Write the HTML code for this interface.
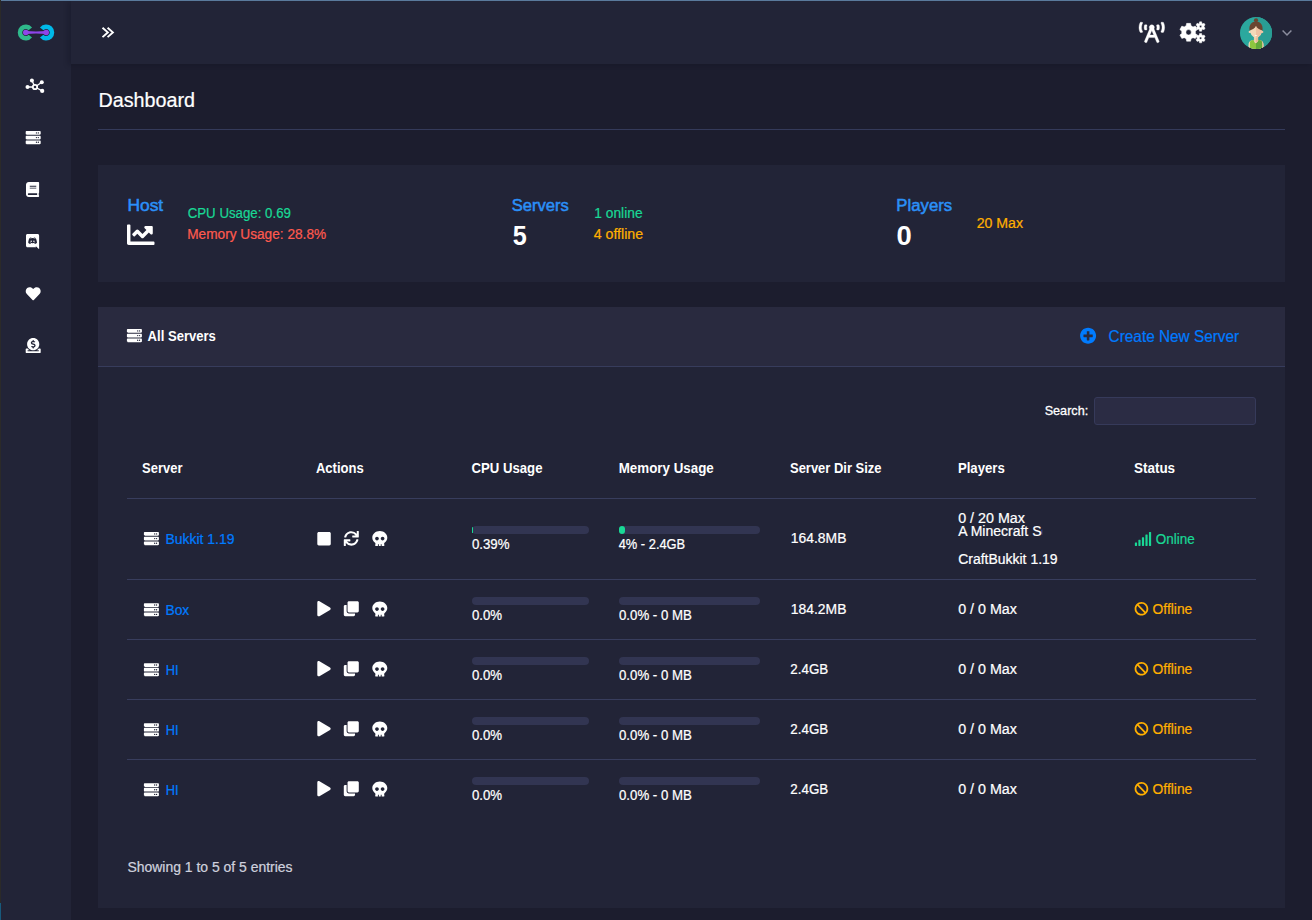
<!DOCTYPE html>
<html><head><meta charset="utf-8"><title>Crafty Controller - Dashboard</title>
<style>
html,body{margin:0;padding:0;}
body{width:1312px;height:920px;overflow:hidden;background:#1c1d2e;font-family:"Liberation Sans",sans-serif;position:relative;}
.r{position:absolute;}
.i{position:absolute;left:0;top:0;display:block;overflow:visible;transform-origin:0 0;}
.t{position:absolute;left:0;top:0;white-space:nowrap;line-height:20px;transform-origin:0 0;}
.clip{position:absolute;left:0;top:0;overflow:hidden;transform-origin:0 0;}
</style></head><body>
<div class="r" style="left:1px;top:1px;width:70px;height:919px;background:#222437;"></div>
<div class="r" style="left:71px;top:1px;width:1241px;height:63px;background:#222437;box-shadow:-3px 1px 5px rgba(10,10,25,.22);"></div>
<div class="r" style="left:0px;top:0px;width:1312px;height:1px;background:#5a7a9c;"></div>
<div class="r" style="left:0px;top:0px;width:1px;height:903px;background:#2b2a29;"></div>
<div class="r" style="left:0px;top:903px;width:1px;height:17px;background:#185a7c;"></div>
<svg class="i" style="transform:translate(14px,20px)" width="44" height="26" viewBox="0 0 44 26">
<path d="M16.30 8.85 A5.8 5.8 0 1 0 16.30 16.15" fill="none" stroke="#2fb98b" stroke-width="4.5"/>
<path d="M27.70 8.85 A5.8 5.8 0 1 1 27.70 16.15" fill="none" stroke="#00b9e8" stroke-width="4.5"/>
<path d="M11.8 11.1 Q22 11.95 32.2 11.1 L32.2 13.9 Q22 13.05 11.8 13.9 Z" fill="#8f45e9"/>
<circle cx="11.8" cy="12.5" r="2.8" fill="#8f45e9"/><circle cx="32.2" cy="12.5" r="2.8" fill="#8f45e9"/>
</svg>
<svg class="i" style="transform:translate(99.5px,25px)" width="17" height="15" viewBox="0 0 17 15"><path d="M3.0 2.7 L8.3 7.4 L3.0 12.1 M8.1 2.7 L13.4 7.4 L8.1 12.1" fill="none" stroke="#fff" stroke-width="1.9" stroke-linecap="butt" stroke-linejoin="miter"/></svg>
<svg class="i" style="transform:translate(24px,76px)" width="22" height="20" viewBox="0 0 22 20">
<g stroke="#fff" stroke-width="1.3" fill="none"><path d="M11 11 L7.9 4.4 M11 11 L17.8 6.2 M11 11 L3.5 11 M11 11 L18.2 14.9"/></g>
<circle cx="11" cy="11" r="2.2" fill="#222437" stroke="#fff" stroke-width="1.8"/>
<circle cx="7.9" cy="4.4" r="2.0" fill="#fff"/><circle cx="17.8" cy="6.2" r="2.0" fill="#fff"/><circle cx="3.5" cy="11" r="2.0" fill="#fff"/><circle cx="18.2" cy="14.9" r="2.1" fill="#fff"/>
</svg>
<svg class="i" style="transform:translate(25.70px,130.10px)" width="15.00" height="15.00" viewBox="0 0 512 512"><path d="M480 160H32c-17.673 0-32-14.327-32-32V64c0-17.673 14.327-32 32-32h448c17.673 0 32 14.327 32 32v64c0 17.673-14.327 32-32 32zm-48-88c-13.255 0-24 10.745-24 24s10.745 24 24 24 24-10.745 24-24-10.745-24-24-24zm-64 0c-13.255 0-24 10.745-24 24s10.745 24 24 24 24-10.745 24-24-10.745-24-24-24zm112 248H32c-17.673 0-32-14.327-32-32v-64c0-17.673 14.327-32 32-32h448c17.673 0 32 14.327 32 32v64c0 17.673-14.327 32-32 32zm-48-88c-13.255 0-24 10.745-24 24s10.745 24 24 24 24-10.745 24-24-10.745-24-24-24zm-64 0c-13.255 0-24 10.745-24 24s10.745 24 24 24 24-10.745 24-24-10.745-24-24-24zm112 248H32c-17.673 0-32-14.327-32-32v-64c0-17.673 14.327-32 32-32h448c17.673 0 32 14.327 32 32v64c0 17.673-14.327 32-32 32zm-48-88c-13.255 0-24 10.745-24 24s10.745 24 24 24 24-10.745 24-24-10.745-24-24-24zm-64 0c-13.255 0-24 10.745-24 24s10.745 24 24 24 24-10.745 24-24-10.745-24-24-24z" fill="#fff"/></svg>
<svg class="i" style="transform:translate(26.00px,182.00px)" width="13.12" height="15.00" viewBox="0 0 448 512"><path d="M448 360V24c0-13.300-10.700-24-24-24H96C43 0 0 43 0 96v320c0 53 43 96 96 96h328c13.300 0 24-10.700 24-24v-16c0-7.500-3.500-14.300-8.900-18.700-4.200-15.400-4.200-59.300 0-74.700 5.400-4.300 8.900-11.100 8.900-18.600zM128 134c0-3.300 2.700-6 6-6h212c3.300 0 6 2.700 6 6v20c0 3.300-2.700 6-6 6H134c-3.300 0-6-2.700-6-6v-20zm0 64c0-3.300 2.700-6 6-6h212c3.300 0 6 2.700 6 6v20c0 3.300-2.700 6-6 6H134c-3.300 0-6-2.700-6-6v-20zm253.400 250H96c-17.700 0-32-14.300-32-32 0-17.600 14.400-32 32-32h285.400c-1.900 17.100-1.900 46.900 0 64z" fill="#fff"/></svg>
<svg class="i" style="transform:translate(26.00px,234.10px)" width="13.12" height="15.00" viewBox="0 0 448 512"><path d="M297.216 243.200c0 15.616-11.520 28.416-26.112 28.416-14.336 0-26.112-12.800-26.112-28.416s11.520-28.416 26.112-28.416c14.592 0 26.112 12.800 26.112 28.416zm-119.552-28.416c-14.592 0-26.112 12.800-26.112 28.416s11.776 28.416 26.112 28.416c14.592 0 26.112-12.800 26.112-28.416.256-15.616-11.520-28.416-26.112-28.416zM448 52.736V512c-64.494-56.994-43.868-38.128-118.784-107.776l13.568 47.360H52.480C23.552 451.584 0 428.032 0 398.848V52.736C0 23.552 23.552 0 52.480 0h343.040C424.448 0 448 23.552 448 52.736zm-72.960 242.688c0-82.432-36.864-149.248-36.864-149.248-36.864-27.648-71.936-26.880-71.936-26.880l-3.584 4.096c43.520 13.312 63.744 32.512 63.744 32.512-60.811-33.329-132.244-33.335-191.232-7.424-9.472 4.352-15.104 7.424-15.104 7.424s21.248-20.224 67.328-33.536l-2.560-3.072s-35.072-.768-71.936 26.880c0 0-36.864 66.816-36.864 149.248 0 0 21.504 37.120 78.080 38.912 0 0 9.472-11.520 17.152-21.248-32.512-9.728-44.800-30.208-44.800-30.208 3.766 2.636 9.976 6.053 10.496 6.400 43.210 24.198 104.588 32.126 159.744 8.960 8.960-3.328 18.944-8.192 29.440-15.104 0 0-12.800 20.992-46.336 30.464 7.680 9.728 16.896 20.736 16.896 20.736 56.576-1.792 78.336-38.912 78.336-38.912z" fill="#fff"/></svg>
<svg class="i" style="transform:translate(25.70px,286.20px)" width="15.00" height="15.00" viewBox="0 0 512 512"><path d="M462.300 62.600C407.500 15.900 326 24.300 275.700 76.200L256 96.500l-19.700-20.300C186.100 24.300 104.500 15.900 49.700 62.600c-62.800 53.600-66.100 149.800-9.900 207.900l193.500 199.800c12.500 12.900 32.800 12.900 45.300 0l193.500-199.800c56.300-58.100 53-154.300-9.800-207.900z" fill="#fff"/></svg>
<svg class="i" style="transform:translate(25.70px,338.10px)" width="15.00" height="15.00" viewBox="0 0 512 512"><path d="M256 416c114.900 0 208-93.100 208-208S370.900 0 256 0 48 93.100 48 208s93.100 208 208 208zM233.800 97.400V80.600c0-9.200 7.400-16.600 16.600-16.600h11.100c9.200 0 16.600 7.400 16.600 16.600v17c15.500.800 30.500 6.100 43 15.400 5.600 4.100 6.200 12.300 1.200 17.100L306 145.600c-3.800 3.700-9.500 3.800-14 1-5.400-3.400-11.400-5.100-17.800-5.100h-38.900c-9 0-16.300 8.200-16.300 18.300 0 8.200 5 15.500 12.100 17.600l62.300 18.700c25.700 7.700 43.700 32.400 43.700 60.100 0 34-26.400 61.500-59.100 62.400v16.800c0 9.200-7.400 16.600-16.600 16.600h-11.100c-9.200 0-16.600-7.400-16.600-16.600v-17c-15.500-.800-30.500-6.100-43-15.400-5.600-4.100-6.200-12.300-1.200-17.100l16.300-15.500c3.800-3.700 9.500-3.800 14-1 5.400 3.400 11.400 5.100 17.800 5.100h38.900c9 0 16.300-8.200 16.300-18.300 0-8.200-5-15.500-12.100-17.600l-62.300-18.700c-25.700-7.700-43.700-32.400-43.700-60.100.100-34 26.400-61.500 59.100-62.400zM480 352h-32.500c-19.600 26-44.600 47.700-73 64h63.800c5.300 0 9.600 3.600 9.600 8v16c0 4.400-4.300 8-9.600 8H73.600c-5.300 0-9.600-3.600-9.600-8v-16c0-4.400 4.300-8 9.600-8h63.800c-28.400-16.300-53.300-38-73-64H32c-17.700 0-32 14.300-32 32v96c0 17.700 14.300 32 32 32h448c17.700 0 32-14.300 32-32v-96c0-17.700-14.300-32-32-32z" fill="#fff"/></svg>
<svg class="i" style="transform:translate(1139.00px,22.25px)" width="25.62" height="20.50" viewBox="0 0 640 512"><path d="M150.940 192h33.730c11.010 0 18.610-10.830 14.860-21.180-4.930-13.580-7.550-27.980-7.550-42.820s2.620-29.240 7.550-42.820C203.290 74.830 195.680 64 184.670 64h-33.730c-7.010 0-13.460 4.490-15.410 11.230C130.640 92.210 128 109.880 128 128c0 18.120 2.640 35.790 7.540 52.760 1.940 6.740 8.390 11.240 15.400 11.240zM89.920 23.340C95.560 12.720 87.970 0 75.960 0H40.630c-6.270 0-12.140 3.590-14.740 9.310C9.400 45.540 0 85.650 0 128c0 24.750 3.120 68.330 26.690 118.860 2.620 5.630 8.420 9.140 14.610 9.140h34.840c12.020 0 19.610-12.740 13.950-23.370-49.780-93.320-16.710-178.150-.17-209.290zM614.060 9.290C611.460 3.580 605.600 0 599.330 0h-35.420c-11.980 0-19.660 12.660-14.020 23.250 18.270 34.290 48.420 119.420.28 209.230-5.720 10.680 1.800 23.520 13.910 23.520h35.230c6.270 0 12.130-3.580 14.730-9.290C630.570 210.480 640 170.360 640 128s-9.420-82.480-25.940-118.710zM489.060 64h-33.730c-11.010 0-18.610 10.830-14.860 21.180 4.930 13.580 7.550 27.980 7.550 42.820s-2.620 29.240-7.550 42.820c-3.760 10.350 3.850 21.180 14.860 21.180h33.730c7.020 0 13.460-4.490 15.410-11.240 4.900-16.970 7.530-34.640 7.530-52.760 0-18.120-2.640-35.790-7.540-52.760-1.940-6.750-8.390-11.240-15.400-11.240zm-116.300 100.120c7.050-10.290 11.200-22.710 11.200-36.120 0-35.350-28.630-64-63.960-64-35.320 0-63.960 28.650-63.960 64 0 13.410 4.150 25.830 11.200 36.120l-130.500 313.410c-3.400 8.150.46 17.520 8.610 20.920l29.510 12.310c8.150 3.400 17.520-.46 20.910-8.610L244.960 384h150.070l49.200 118.150c3.400 8.160 12.760 12.010 20.910 8.610l29.510-12.310c8.150-3.400 12-12.770 8.610-20.920l-130.500-313.410zM271.620 320L320 203.810 368.380 320h-96.760z" fill="#fff" stroke="#fff" stroke-width="9"/></svg>
<svg class="i" style="transform:translate(1178px,19px)" width="30" height="27" viewBox="0 0 30 27"><path d="M13.07 6.86 L12.58 4.37 L8.62 4.37 L8.13 6.86 L7.63 7.07 L7.15 7.32 L6.69 7.61 L6.26 7.94 L3.85 7.12 L1.87 10.55 L3.78 12.22 L3.72 12.76 L3.70 13.30 L3.72 13.84 L3.78 14.38 L1.87 16.05 L3.85 19.48 L6.26 18.66 L6.69 18.99 L7.15 19.28 L7.63 19.53 L8.13 19.74 L8.62 22.23 L12.58 22.23 L13.07 19.74 L13.57 19.53 L14.05 19.28 L14.51 18.99 L14.94 18.66 L17.35 19.48 L19.33 16.05 L17.42 14.38 L17.48 13.84 L17.50 13.30 L17.48 12.76 L17.42 12.22 L19.33 10.55 L17.35 7.12 L14.94 7.94 L14.51 7.61 L14.05 7.32 L13.57 7.07 Z M7.90 13.30 a2.7 2.7 0 1 0 5.4 0 a2.7 2.7 0 1 0 -5.4 0 Z M23.84 4.28 L23.63 2.86 L21.57 2.86 L21.36 4.28 L21.11 4.39 L20.88 4.51 L20.65 4.66 L20.43 4.82 L19.10 4.29 L18.07 6.07 L19.19 6.96 L19.16 7.23 L19.15 7.50 L19.16 7.77 L19.19 8.04 L18.07 8.93 L19.10 10.71 L20.43 10.18 L20.65 10.34 L20.88 10.49 L21.11 10.61 L21.36 10.72 L21.57 12.14 L23.63 12.14 L23.84 10.72 L24.09 10.61 L24.33 10.49 L24.55 10.34 L24.77 10.18 L26.10 10.71 L27.13 8.93 L26.01 8.04 L26.04 7.77 L26.05 7.50 L26.04 7.23 L26.01 6.96 L27.13 6.07 L26.10 4.29 L24.77 4.82 L24.55 4.66 L24.32 4.51 L24.09 4.39 Z M21.45 7.50 a1.15 1.15 0 1 0 2.3 0 a1.15 1.15 0 1 0 -2.3 0 Z M23.84 15.98 L23.63 14.56 L21.57 14.56 L21.36 15.98 L21.11 16.09 L20.88 16.21 L20.65 16.36 L20.43 16.52 L19.10 15.99 L18.07 17.77 L19.19 18.66 L19.16 18.93 L19.15 19.20 L19.16 19.47 L19.19 19.74 L18.07 20.63 L19.10 22.41 L20.43 21.88 L20.65 22.04 L20.88 22.19 L21.11 22.31 L21.36 22.42 L21.57 23.84 L23.63 23.84 L23.84 22.42 L24.09 22.31 L24.33 22.19 L24.55 22.04 L24.77 21.88 L26.10 22.41 L27.13 20.63 L26.01 19.74 L26.04 19.47 L26.05 19.20 L26.04 18.93 L26.01 18.66 L27.13 17.77 L26.10 15.99 L24.77 16.52 L24.55 16.36 L24.32 16.21 L24.09 16.09 Z M21.45 19.20 a1.15 1.15 0 1 0 2.3 0 a1.15 1.15 0 1 0 -2.3 0 Z" fill="#fff" fill-rule="evenodd" stroke="#fff" stroke-width="0.5" stroke-linejoin="round"/></svg>
<svg class="i" style="transform:translate(1240px,17px)" width="32" height="32" viewBox="0 0 32 32">
<defs><clipPath id="av"><circle cx="16" cy="16" r="16.05"/></clipPath><clipPath id="avl"><rect x="0" y="0" width="16" height="32"/></clipPath><clipPath id="avr"><rect x="16" y="0" width="16" height="32"/></clipPath></defs>
<g clip-path="url(#av)">
<rect width="32" height="32" fill="#2ba89e"/><rect x="16" width="16" height="32" fill="#299d94"/>
<path id="avarm" d="M8.5 32 L8.5 28 Q8.6 24.3 11.4 23.5 L20.6 23.5 Q23.4 24.3 23.5 28 L23.5 32 Z" fill="#f1d6b4"/>
<path d="M16 23.5 L20.6 23.5 Q23.4 24.3 23.5 28 L23.5 32 L16 32 Z" fill="#e9c39f"/>
<path d="M9.9 32 L9.9 25.4 Q10 23.6 12 23.2 L13.4 22.9 Q16 29.6 18.6 22.9 L20 23.2 Q22 23.6 22.1 25.4 L22.1 32 Z" fill="#8dc63f"/>
<path d="M16 26.2 Q17.6 25.8 18.6 22.9 L20 23.2 Q22 23.6 22.1 25.4 L22.1 32 L16 32 Z" fill="#62a93c"/>
<path d="M13.9 18 L18.1 18 L18.1 23.4 Q16 27.6 13.9 23.4 Z" fill="#efcfac"/>
<path d="M16 18 L18.1 18 L18.1 23.4 Q17.2 25.3 16 25.5 Z" fill="#e6bd98"/>
<circle cx="9.8" cy="14.9" r="1.15" fill="#f3d9b9"/><circle cx="22.2" cy="14.9" r="1.15" fill="#edc2a3"/>
<path d="M10.2 8 L21.8 8 L21.8 15.2 Q21.4 17.6 18.4 19.9 Q16 21.4 13.6 19.9 Q10.6 17.6 10.2 15.2 Z" fill="#f3d9b9"/>
<path d="M16 8 L21.8 8 L21.8 15.2 Q21.4 17.6 18.4 19.9 Q17.2 20.7 16 20.8 Z" fill="#edc2a3"/>
<path d="M9.5 13.4 C8.7 7.6 12 4.5 16 4.5 C20 4.5 23.3 7.6 22.5 13.4 C19.6 12.9 16.8 11 16 8.7 C15.2 11 12.4 12.9 9.5 13.4 Z" fill="#6a4631"/>
<circle cx="16" cy="3.3" r="2.1" fill="#6a4631"/>
<path d="M14.5 18.5 Q16 19.7 17.500 18.500 Q16 18.200 14.500 18.500 Z" fill="#fff"/>
</g></svg>
<svg class="i" style="transform:translate(1281px,28px)" width="12" height="10" viewBox="0 0 12 10"><path d="M1.600 2.400 L6 6.900 L10.400 2.400" fill="none" stroke="#8b8d9e" stroke-width="1.5"/></svg>
<span class="t" style="font-size:20px;color:#fff;transform:translate(98.51px,90.07px) scaleX(0.9864);-webkit-text-stroke:0.22px #fff;">Dashboard</span>
<div class="r" style="left:98px;top:129px;width:1187px;height:1px;background:#343a5a;"></div>
<div class="r" style="left:98px;top:165px;width:1187px;height:117px;background:#222437;"></div>
<span class="t" style="font-size:16px;color:#2b90f8;transform:translate(127.47px,196.46px) scaleX(1.0846);-webkit-text-stroke:0.5px #2b90f8;">Host</span>
<svg class="i" style="transform:translate(127.00px,220.95px)" width="27.50" height="27.50" viewBox="0 0 512 512"><path d="M496 384H64V80c0-8.840-7.160-16-16-16H16C7.160 64 0 71.160 0 80v336c0 17.670 14.330 32 32 32h464c8.840 0 16-7.160 16-16v-32c0-8.840-7.160-16-16-16zM464 96H345.940c-21.380 0-32.090 25.850-16.970 40.970l32.400 32.400L288 242.750l-73.370-73.370c-12.500-12.500-32.760-12.500-45.250 0l-68.690 68.690c-6.250 6.250-6.250 16.380 0 22.630l22.620 22.620c6.250 6.250 16.380 6.250 22.630 0L192 237.250l73.370 73.370c12.500 12.500 32.760 12.500 45.250 0l96-96 32.400 32.400c15.120 15.120 40.970 4.410 40.970-16.970V112c.01-8.840-7.150-16-15.990-16z" fill="#fff"/></svg>
<span class="t" style="font-size:14px;color:#19d895;transform:translate(187.70px,202.85px) scaleX(0.9473);-webkit-text-stroke:0.22px #19d895;">CPU Usage: 0.69</span>
<span class="t" style="font-size:14px;color:#ff5a4e;transform:translate(187.21px,224.15px) scaleX(0.9755);-webkit-text-stroke:0.22px #ff5a4e;">Memory Usage: 28.8%</span>
<span class="t" style="font-size:16px;color:#2b90f8;transform:translate(511.66px,196.46px) scaleX(1.0355);-webkit-text-stroke:0.5px #2b90f8;">Servers</span>
<span class="t" style="font-size:27px;color:#fff;transform:translate(512.80px,225.94px) scaleX(0.9333);font-weight:700;">5</span>
<span class="t" style="font-size:14px;color:#19d895;transform:translate(594.31px,202.85px) scaleX(0.9841);-webkit-text-stroke:0.22px #19d895;">1 online</span>
<span class="t" style="font-size:14px;color:#ffaf00;transform:translate(593.71px,224.15px) scaleX(1.0136);-webkit-text-stroke:0.22px #ffaf00;">4 offline</span>
<span class="t" style="font-size:16px;color:#2b90f8;transform:translate(896.36px,196.46px) scaleX(1.0450);-webkit-text-stroke:0.5px #2b90f8;">Players</span>
<span class="t" style="font-size:27px;color:#fff;transform:translate(896.40px,225.94px) scaleX(1.0133);font-weight:700;">0</span>
<span class="t" style="font-size:14px;color:#ffaf00;transform:translate(976.71px,213.35px) scaleX(1.0074);-webkit-text-stroke:0.22px #ffaf00;">20 Max</span>
<div class="r" style="left:98px;top:307px;width:1187px;height:601px;background:#222437;"></div>
<div class="r" style="left:98px;top:307px;width:1187px;height:59px;background:#292a3f;"></div>
<div class="r" style="left:98px;top:366px;width:1187px;height:1px;background:#373c5c;"></div>
<svg class="i" style="transform:translate(126.90px,328.10px)" width="15.00" height="15.00" viewBox="0 0 512 512"><path d="M480 160H32c-17.673 0-32-14.327-32-32V64c0-17.673 14.327-32 32-32h448c17.673 0 32 14.327 32 32v64c0 17.673-14.327 32-32 32zm-48-88c-13.255 0-24 10.745-24 24s10.745 24 24 24 24-10.745 24-24-10.745-24-24-24zm-64 0c-13.255 0-24 10.745-24 24s10.745 24 24 24 24-10.745 24-24-10.745-24-24-24zm112 248H32c-17.673 0-32-14.327-32-32v-64c0-17.673 14.327-32 32-32h448c17.673 0 32 14.327 32 32v64c0 17.673-14.327 32-32 32zm-48-88c-13.255 0-24 10.745-24 24s10.745 24 24 24 24-10.745 24-24-10.745-24-24-24zm-64 0c-13.255 0-24 10.745-24 24s10.745 24 24 24 24-10.745 24-24-10.745-24-24-24zm112 248H32c-17.673 0-32-14.327-32-32v-64c0-17.673 14.327-32 32-32h448c17.673 0 32 14.327 32 32v64c0 17.673-14.327 32-32 32zm-48-88c-13.255 0-24 10.745-24 24s10.745 24 24 24 24-10.745 24-24-10.745-24-24-24zm-64 0c-13.255 0-24 10.745-24 24s10.745 24 24 24 24-10.745 24-24-10.745-24-24-24z" fill="#fff"/></svg>
<span class="t" style="font-size:14px;color:#fff;transform:translate(147.60px,326.05px) scaleX(0.9332);font-weight:700;">All Servers</span>
<svg class="i" style="transform:translate(1079.85px,327.60px)" width="16.50" height="16.50" viewBox="0 0 512 512"><path d="M256 8C119 8 8 119 8 256s111 248 248 248 248-111 248-248S393 8 256 8zm144 276c0 6.600-5.400 12-12 12h-92v92c0 6.600-5.400 12-12 12h-56c-6.600 0-12-5.400-12-12v-92h-92c-6.600 0-12-5.400-12-12v-56c0-6.600 5.400-12 12-12h92v-92c0-6.600 5.400-12 12-12h56c6.600 0 12 5.400 12 12v92h92c6.600 0 12 5.400 12 12v56z" fill="#007bff"/></svg>
<span class="t" style="font-size:16px;color:#007bff;transform:translate(1108.61px,326.56px) scaleX(0.9598);-webkit-text-stroke:0.22px #007bff;">Create New Server</span>
<span class="t" style="font-size:13.6px;color:#fff;transform:translate(1044.64px,401.19px) scaleX(0.9306);-webkit-text-stroke:0.3px #fff;">Search:</span>
<div class="r" style="left:1094px;top:397px;width:162px;height:28px;background:#2b2c44;border:1px solid #363a5a;border-radius:3px;box-sizing:border-box;"></div>
<span class="t" style="font-size:14px;color:#fff;transform:translate(142.10px,458.45px) scaleX(0.9251);font-weight:700;">Server</span>
<span class="t" style="font-size:14px;color:#fff;transform:translate(315.90px,458.45px) scaleX(0.9315);font-weight:700;">Actions</span>
<span class="t" style="font-size:14px;color:#fff;transform:translate(471.50px,458.45px) scaleX(0.9404);font-weight:700;">CPU Usage</span>
<span class="t" style="font-size:14px;color:#fff;transform:translate(618.70px,458.45px) scaleX(0.9542);font-weight:700;">Memory Usage</span>
<span class="t" style="font-size:14px;color:#fff;transform:translate(790.00px,458.45px) scaleX(0.9260);font-weight:700;">Server Dir Size</span>
<span class="t" style="font-size:14px;color:#fff;transform:translate(957.90px,458.45px) scaleX(0.9415);font-weight:700;">Players</span>
<span class="t" style="font-size:14px;color:#fff;transform:translate(1134.00px,458.45px) scaleX(0.9600);font-weight:700;">Status</span>
<div class="r" style="left:127px;top:498px;width:1129px;height:1px;background:#383d5d;"></div>
<div class="r" style="left:127px;top:579px;width:1129px;height:1px;background:#383d5d;"></div>
<div class="r" style="left:127px;top:639px;width:1129px;height:1px;background:#383d5d;"></div>
<div class="r" style="left:127px;top:699px;width:1129px;height:1px;background:#383d5d;"></div>
<div class="r" style="left:127px;top:759px;width:1129px;height:1px;background:#383d5d;"></div>
<svg class="i" style="transform:translate(143.90px,531.10px)" width="15.00" height="15.00" viewBox="0 0 512 512"><path d="M480 160H32c-17.673 0-32-14.327-32-32V64c0-17.673 14.327-32 32-32h448c17.673 0 32 14.327 32 32v64c0 17.673-14.327 32-32 32zm-48-88c-13.255 0-24 10.745-24 24s10.745 24 24 24 24-10.745 24-24-10.745-24-24-24zm-64 0c-13.255 0-24 10.745-24 24s10.745 24 24 24 24-10.745 24-24-10.745-24-24-24zm112 248H32c-17.673 0-32-14.327-32-32v-64c0-17.673 14.327-32 32-32h448c17.673 0 32 14.327 32 32v64c0 17.673-14.327 32-32 32zm-48-88c-13.255 0-24 10.745-24 24s10.745 24 24 24 24-10.745 24-24-10.745-24-24-24zm-64 0c-13.255 0-24 10.745-24 24s10.745 24 24 24 24-10.745 24-24-10.745-24-24-24zm112 248H32c-17.673 0-32-14.327-32-32v-64c0-17.673 14.327-32 32-32h448c17.673 0 32 14.327 32 32v64c0 17.673-14.327 32-32 32zm-48-88c-13.255 0-24 10.745-24 24s10.745 24 24 24 24-10.745 24-24-10.745-24-24-24zm-64 0c-13.255 0-24 10.745-24 24s10.745 24 24 24 24-10.745 24-24-10.745-24-24-24z" fill="#fff"/></svg>
<span class="t" style="font-size:14px;color:#007bff;transform:translate(165.41px,528.95px) scaleX(0.9976);-webkit-text-stroke:0.22px #007bff;">Bukkit 1.19</span>
<svg class="i" style="transform:translate(317.30px,531.10px)" width="13.47" height="15.40" viewBox="0 0 448 512"><path d="M400 32H48C21.500 32 0 53.500 0 80v352c0 26.500 21.500 48 48 48h352c26.500 0 48-21.500 48-48V80c0-26.500-21.500-48-48-48z" fill="#fff"/></svg>
<svg class="i" style="transform:translate(343.80px,530.90px)" width="15.00" height="15.00" viewBox="0 0 512 512"><path d="M440.650 12.570l4 82.770A247.160 247.160 0 0 0 255.830 8C134.730 8 33.910 94.920 12.290 209.820A12 12 0 0 0 24.090 224h49.050a12 12 0 0 0 11.670-9.260 175.910 175.910 0 0 1 317-56.940l-101.460-4.860a12 12 0 0 0-12.570 12v47.410a12 12 0 0 0 12 12H500a12 12 0 0 0 12-12V12a12 12 0 0 0-12-12h-47.370a12 12 0 0 0-11.980 12.570zM255.830 432a175.610 175.610 0 0 1-146-77.800l101.800 4.870a12 12 0 0 0 12.570-12v-47.400a12 12 0 0 0-12-12H12a12 12 0 0 0-12 12V500a12 12 0 0 0 12 12h47.350a12 12 0 0 0 12-12.600l-4.150-82.570A247.170 247.170 0 0 0 255.830 504c121.110 0 221.930-86.920 243.550-201.820a12 12 0 0 0-11.800-14.180h-49.050a12 12 0 0 0-11.670 9.260A175.860 175.860 0 0 1 255.830 432z" fill="#fff"/></svg>
<svg class="i" style="transform:translate(372.30px,531.10px)" width="15.00" height="15.00" viewBox="0 0 512 512"><path d="M256 0C114.600 0 0 100.300 0 224c0 70.100 36.900 132.600 94.500 173.700 9.600 6.900 15.200 18.100 13.500 29.900l-9.400 66.200c-1.400 9.600 6 18.200 15.700 18.200H192v-56c0-4.400 3.600-8 8-8h16c4.400 0 8 3.600 8 8v56h64v-56c0-4.400 3.600-8 8-8h16c4.400 0 8 3.600 8 8v56h77.700c9.700 0 17.100-8.600 15.700-18.200l-9.400-66.200c-1.700-11.700 3.800-23 13.500-29.900C475.100 356.600 512 294.100 512 224 512 100.300 397.400 0 256 0zm-96 320c-35.300 0-64-28.700-64-64s28.700-64 64-64 64 28.700 64 64-28.700 64-64 64zm192 0c-35.300 0-64-28.700-64-64s28.700-64 64-64 64 28.700 64 64-28.700 64-64 64z" fill="#fff"/></svg>
<div class="r" style="left:472px;top:526.4px;width:117px;height:8px;background:#323552;border-radius:4px;"></div>
<div class="r" style="left:619px;top:526.4px;width:141px;height:8px;background:#323552;border-radius:4px;"></div>
<div class="r" style="left:472px;top:527.4px;width:1px;height:6px;background:#19d895;border-radius:1px;"></div>
<div class="r" style="left:619px;top:526.4px;width:5.6px;height:8px;background:#19d895;border-radius:4px;"></div>
<span class="t" style="font-size:14px;color:#fff;transform:translate(471.90px,533.85px) scaleX(0.9472);-webkit-text-stroke:0.22px #fff;">0.39%</span>
<span class="t" style="font-size:14px;color:#fff;transform:translate(618.70px,533.85px) scaleX(0.9188);-webkit-text-stroke:0.22px #fff;">4% - 2.4GB</span>
<span class="t" style="font-size:14px;color:#fff;transform:translate(790.81px,527.95px) scaleX(0.9932);-webkit-text-stroke:0.22px #fff;">164.8MB</span>
<span class="t" style="font-size:14px;color:#fff;transform:translate(958.21px,507.55px) scaleX(1.0199);-webkit-text-stroke:0.22px #fff;">0 / 20 Max</span>
<div class="clip" style="transform:translate(957.10px,521.25px);width:85.40px;height:20px"><span class="t" style="font-size:14px;color:#fff;transform:translate(1.11px,0) scaleX(1.0000);-webkit-text-stroke:0.22px #fff;">A Minecraft Server</span></div>
<span class="t" style="font-size:14px;color:#fff;transform:translate(958.21px,549.15px) scaleX(0.9975);-webkit-text-stroke:0.22px #fff;">CraftBukkit 1.19</span>
<svg class="i" style="transform:translate(1134.20px,531.90px)" width="17.60" height="14.10" viewBox="0 0 640 512"><path d="M216 288h-48c-8.840 0-16 7.160-16 16v192c0 8.840 7.160 16 16 16h48c8.840 0 16-7.160 16-16V304c0-8.840-7.160-16-16-16zM88 384H40c-8.840 0-16 7.160-16 16v96c0 8.840 7.160 16 16 16h48c8.840 0 16-7.160 16-16v-96c0-8.840-7.160-16-16-16zm256-192h-48c-8.840 0-16 7.160-16 16v288c0 8.840 7.160 16 16 16h48c8.840 0 16-7.160 16-16V208c0-8.840-7.160-16-16-16zm128-96h-48c-8.840 0-16 7.160-16 16v384c0 8.840 7.160 16 16 16h48c8.840 0 16-7.160 16-16V112c0-8.840-7.160-16-16-16zM600 0h-48c-8.840 0-16 7.160-16 16v480c0 8.840 7.160 16 16 16h48c8.840 0 16-7.160 16-16V16c0-8.840-7.160-16-16-16z" fill="#19d895"/></svg>
<span class="t" style="font-size:14px;color:#19d895;transform:translate(1155.71px,528.95px) scaleX(0.9651);-webkit-text-stroke:0.22px #19d895;">Online</span>
<svg class="i" style="transform:translate(143.90px,602.20px)" width="15.00" height="15.00" viewBox="0 0 512 512"><path d="M480 160H32c-17.673 0-32-14.327-32-32V64c0-17.673 14.327-32 32-32h448c17.673 0 32 14.327 32 32v64c0 17.673-14.327 32-32 32zm-48-88c-13.255 0-24 10.745-24 24s10.745 24 24 24 24-10.745 24-24-10.745-24-24-24zm-64 0c-13.255 0-24 10.745-24 24s10.745 24 24 24 24-10.745 24-24-10.745-24-24-24zm112 248H32c-17.673 0-32-14.327-32-32v-64c0-17.673 14.327-32 32-32h448c17.673 0 32 14.327 32 32v64c0 17.673-14.327 32-32 32zm-48-88c-13.255 0-24 10.745-24 24s10.745 24 24 24 24-10.745 24-24-10.745-24-24-24zm-64 0c-13.255 0-24 10.745-24 24s10.745 24 24 24 24-10.745 24-24-10.745-24-24-24zm112 248H32c-17.673 0-32-14.327-32-32v-64c0-17.673 14.327-32 32-32h448c17.673 0 32 14.327 32 32v64c0 17.673-14.327 32-32 32zm-48-88c-13.255 0-24 10.745-24 24s10.745 24 24 24 24-10.745 24-24-10.745-24-24-24zm-64 0c-13.255 0-24 10.745-24 24s10.745 24 24 24 24-10.745 24-24-10.745-24-24-24z" fill="#fff"/></svg>
<span class="t" style="font-size:14px;color:#007bff;transform:translate(165.41px,599.95px) scaleX(0.9899);-webkit-text-stroke:0.22px #007bff;">Box</span>
<svg class="i" style="transform:translate(317.30px,601.05px)" width="13.39" height="15.30" viewBox="0 0 448 512"><path d="M424.400 214.700L72.400 6.600C43.800-10.300 0 6.100 0 47.900V464c0 37.500 40.700 60.100 72.400 41.300l352-208c31.400-18.500 31.500-64.100 0-82.600z" fill="#fff"/></svg>
<svg class="i" style="transform:translate(343.80px,601.20px)" width="15.00" height="15.00" viewBox="0 0 512 512"><path d="M464 0c26.510 0 48 21.490 48 48v288c0 26.510-21.490 48-48 48H176c-26.510 0-48-21.490-48-48V48c0-26.510 21.490-48 48-48h288M176 416c-44.112 0-80-35.888-80-80V128H48c-26.510 0-48 21.490-48 48v288c0 26.510 21.490 48 48 48h288c26.510 0 48-21.490 48-48v-48H176z" fill="#fff"/></svg>
<svg class="i" style="transform:translate(372.30px,601.50px)" width="15.00" height="15.00" viewBox="0 0 512 512"><path d="M256 0C114.600 0 0 100.300 0 224c0 70.100 36.900 132.600 94.500 173.700 9.600 6.900 15.200 18.100 13.500 29.900l-9.400 66.200c-1.400 9.600 6 18.200 15.700 18.200H192v-56c0-4.400 3.600-8 8-8h16c4.400 0 8 3.600 8 8v56h64v-56c0-4.400 3.600-8 8-8h16c4.400 0 8 3.600 8 8v56h77.700c9.700 0 17.100-8.600 15.700-18.200l-9.400-66.200c-1.700-11.700 3.800-23 13.500-29.900C475.100 356.600 512 294.100 512 224 512 100.300 397.400 0 256 0zm-96 320c-35.300 0-64-28.700-64-64s28.700-64 64-64 64 28.700 64 64-28.700 64-64 64zm192 0c-35.300 0-64-28.700-64-64s28.700-64 64-64 64 28.700 64 64-28.700 64-64 64z" fill="#fff"/></svg>
<div class="r" style="left:472px;top:596.7px;width:117px;height:8px;background:#323552;border-radius:4px;"></div>
<div class="r" style="left:619px;top:596.7px;width:141px;height:8px;background:#323552;border-radius:4px;"></div>
<span class="t" style="font-size:14px;color:#fff;transform:translate(471.90px,604.85px) scaleX(0.9453);-webkit-text-stroke:0.22px #fff;">0.0%</span>
<span class="t" style="font-size:14px;color:#fff;transform:translate(619.00px,604.85px) scaleX(0.9454);-webkit-text-stroke:0.22px #fff;">0.0% - 0 MB</span>
<span class="t" style="font-size:14px;color:#fff;transform:translate(790.81px,599.05px) scaleX(0.9932);-webkit-text-stroke:0.22px #fff;">184.2MB</span>
<span class="t" style="font-size:14px;color:#fff;transform:translate(958.21px,599.05px) scaleX(1.0193);-webkit-text-stroke:0.22px #fff;">0 / 0 Max</span>
<svg class="i" style="transform:translate(1134.40px,601.70px)" width="14.10" height="14.10" viewBox="0 0 512 512"><path d="M256 8C119.034 8 8 119.033 8 256s111.034 248 248 248 248-111.034 248-248S392.967 8 256 8zm130.108 117.892c65.448 65.448 70 165.481 20.677 235.637L150.470 105.216c70.204-49.356 170.226-44.735 235.638 20.676zM125.892 386.108c-65.448-65.448-70-165.481-20.677-235.637L361.530 406.784c-70.203 49.356-170.226 44.736-235.638-20.676z" fill="#ffaf00"/></svg>
<span class="t" style="font-size:14px;color:#ffaf00;transform:translate(1152.61px,598.85px) scaleX(0.9850);-webkit-text-stroke:0.22px #ffaf00;">Offline</span>
<svg class="i" style="transform:translate(143.90px,662.20px)" width="15.00" height="15.00" viewBox="0 0 512 512"><path d="M480 160H32c-17.673 0-32-14.327-32-32V64c0-17.673 14.327-32 32-32h448c17.673 0 32 14.327 32 32v64c0 17.673-14.327 32-32 32zm-48-88c-13.255 0-24 10.745-24 24s10.745 24 24 24 24-10.745 24-24-10.745-24-24-24zm-64 0c-13.255 0-24 10.745-24 24s10.745 24 24 24 24-10.745 24-24-10.745-24-24-24zm112 248H32c-17.673 0-32-14.327-32-32v-64c0-17.673 14.327-32 32-32h448c17.673 0 32 14.327 32 32v64c0 17.673-14.327 32-32 32zm-48-88c-13.255 0-24 10.745-24 24s10.745 24 24 24 24-10.745 24-24-10.745-24-24-24zm-64 0c-13.255 0-24 10.745-24 24s10.745 24 24 24 24-10.745 24-24-10.745-24-24-24zm112 248H32c-17.673 0-32-14.327-32-32v-64c0-17.673 14.327-32 32-32h448c17.673 0 32 14.327 32 32v64c0 17.673-14.327 32-32 32zm-48-88c-13.255 0-24 10.745-24 24s10.745 24 24 24 24-10.745 24-24-10.745-24-24-24zm-64 0c-13.255 0-24 10.745-24 24s10.745 24 24 24 24-10.745 24-24-10.745-24-24-24z" fill="#fff"/></svg>
<span class="t" style="font-size:14px;color:#007bff;transform:translate(165.70px,659.95px) scaleX(0.9212);-webkit-text-stroke:0.22px #007bff;">HI</span>
<svg class="i" style="transform:translate(317.30px,661.05px)" width="13.39" height="15.30" viewBox="0 0 448 512"><path d="M424.400 214.700L72.400 6.600C43.800-10.300 0 6.100 0 47.900V464c0 37.500 40.700 60.100 72.400 41.300l352-208c31.400-18.500 31.500-64.100 0-82.600z" fill="#fff"/></svg>
<svg class="i" style="transform:translate(343.80px,661.20px)" width="15.00" height="15.00" viewBox="0 0 512 512"><path d="M464 0c26.510 0 48 21.490 48 48v288c0 26.510-21.490 48-48 48H176c-26.510 0-48-21.490-48-48V48c0-26.510 21.490-48 48-48h288M176 416c-44.112 0-80-35.888-80-80V128H48c-26.510 0-48 21.490-48 48v288c0 26.510 21.490 48 48 48h288c26.510 0 48-21.490 48-48v-48H176z" fill="#fff"/></svg>
<svg class="i" style="transform:translate(372.30px,661.50px)" width="15.00" height="15.00" viewBox="0 0 512 512"><path d="M256 0C114.600 0 0 100.300 0 224c0 70.100 36.900 132.600 94.500 173.700 9.600 6.900 15.200 18.100 13.500 29.900l-9.400 66.200c-1.400 9.600 6 18.200 15.700 18.200H192v-56c0-4.400 3.600-8 8-8h16c4.400 0 8 3.600 8 8v56h64v-56c0-4.400 3.600-8 8-8h16c4.400 0 8 3.600 8 8v56h77.700c9.700 0 17.100-8.600 15.700-18.200l-9.400-66.200c-1.700-11.700 3.800-23 13.500-29.900C475.100 356.600 512 294.100 512 224 512 100.300 397.400 0 256 0zm-96 320c-35.300 0-64-28.700-64-64s28.700-64 64-64 64 28.700 64 64-28.700 64-64 64zm192 0c-35.300 0-64-28.700-64-64s28.700-64 64-64 64 28.700 64 64-28.700 64-64 64z" fill="#fff"/></svg>
<div class="r" style="left:472px;top:656.7px;width:117px;height:8px;background:#323552;border-radius:4px;"></div>
<div class="r" style="left:619px;top:656.7px;width:141px;height:8px;background:#323552;border-radius:4px;"></div>
<span class="t" style="font-size:14px;color:#fff;transform:translate(471.90px,664.85px) scaleX(0.9453);-webkit-text-stroke:0.22px #fff;">0.0%</span>
<span class="t" style="font-size:14px;color:#fff;transform:translate(619.00px,664.85px) scaleX(0.9454);-webkit-text-stroke:0.22px #fff;">0.0% - 0 MB</span>
<span class="t" style="font-size:14px;color:#fff;transform:translate(790.31px,659.05px) scaleX(0.9547);-webkit-text-stroke:0.22px #fff;">2.4GB</span>
<span class="t" style="font-size:14px;color:#fff;transform:translate(958.21px,659.05px) scaleX(1.0193);-webkit-text-stroke:0.22px #fff;">0 / 0 Max</span>
<svg class="i" style="transform:translate(1134.40px,661.70px)" width="14.10" height="14.10" viewBox="0 0 512 512"><path d="M256 8C119.034 8 8 119.033 8 256s111.034 248 248 248 248-111.034 248-248S392.967 8 256 8zm130.108 117.892c65.448 65.448 70 165.481 20.677 235.637L150.470 105.216c70.204-49.356 170.226-44.735 235.638 20.676zM125.892 386.108c-65.448-65.448-70-165.481-20.677-235.637L361.530 406.784c-70.203 49.356-170.226 44.736-235.638-20.676z" fill="#ffaf00"/></svg>
<span class="t" style="font-size:14px;color:#ffaf00;transform:translate(1152.61px,658.85px) scaleX(0.9850);-webkit-text-stroke:0.22px #ffaf00;">Offline</span>
<svg class="i" style="transform:translate(143.90px,722.20px)" width="15.00" height="15.00" viewBox="0 0 512 512"><path d="M480 160H32c-17.673 0-32-14.327-32-32V64c0-17.673 14.327-32 32-32h448c17.673 0 32 14.327 32 32v64c0 17.673-14.327 32-32 32zm-48-88c-13.255 0-24 10.745-24 24s10.745 24 24 24 24-10.745 24-24-10.745-24-24-24zm-64 0c-13.255 0-24 10.745-24 24s10.745 24 24 24 24-10.745 24-24-10.745-24-24-24zm112 248H32c-17.673 0-32-14.327-32-32v-64c0-17.673 14.327-32 32-32h448c17.673 0 32 14.327 32 32v64c0 17.673-14.327 32-32 32zm-48-88c-13.255 0-24 10.745-24 24s10.745 24 24 24 24-10.745 24-24-10.745-24-24-24zm-64 0c-13.255 0-24 10.745-24 24s10.745 24 24 24 24-10.745 24-24-10.745-24-24-24zm112 248H32c-17.673 0-32-14.327-32-32v-64c0-17.673 14.327-32 32-32h448c17.673 0 32 14.327 32 32v64c0 17.673-14.327 32-32 32zm-48-88c-13.255 0-24 10.745-24 24s10.745 24 24 24 24-10.745 24-24-10.745-24-24-24zm-64 0c-13.255 0-24 10.745-24 24s10.745 24 24 24 24-10.745 24-24-10.745-24-24-24z" fill="#fff"/></svg>
<span class="t" style="font-size:14px;color:#007bff;transform:translate(165.70px,719.95px) scaleX(0.9212);-webkit-text-stroke:0.22px #007bff;">HI</span>
<svg class="i" style="transform:translate(317.30px,721.05px)" width="13.39" height="15.30" viewBox="0 0 448 512"><path d="M424.400 214.700L72.400 6.600C43.800-10.300 0 6.100 0 47.900V464c0 37.500 40.700 60.100 72.400 41.300l352-208c31.400-18.500 31.500-64.100 0-82.600z" fill="#fff"/></svg>
<svg class="i" style="transform:translate(343.80px,721.20px)" width="15.00" height="15.00" viewBox="0 0 512 512"><path d="M464 0c26.510 0 48 21.490 48 48v288c0 26.510-21.490 48-48 48H176c-26.510 0-48-21.490-48-48V48c0-26.510 21.490-48 48-48h288M176 416c-44.112 0-80-35.888-80-80V128H48c-26.510 0-48 21.490-48 48v288c0 26.510 21.490 48 48 48h288c26.510 0 48-21.490 48-48v-48H176z" fill="#fff"/></svg>
<svg class="i" style="transform:translate(372.30px,721.50px)" width="15.00" height="15.00" viewBox="0 0 512 512"><path d="M256 0C114.600 0 0 100.300 0 224c0 70.100 36.900 132.600 94.500 173.700 9.600 6.900 15.200 18.100 13.500 29.900l-9.400 66.200c-1.400 9.600 6 18.200 15.700 18.200H192v-56c0-4.400 3.600-8 8-8h16c4.400 0 8 3.600 8 8v56h64v-56c0-4.400 3.600-8 8-8h16c4.400 0 8 3.600 8 8v56h77.700c9.700 0 17.100-8.600 15.700-18.200l-9.400-66.200c-1.700-11.700 3.800-23 13.500-29.900C475.100 356.600 512 294.100 512 224 512 100.300 397.400 0 256 0zm-96 320c-35.300 0-64-28.700-64-64s28.700-64 64-64 64 28.700 64 64-28.700 64-64 64zm192 0c-35.300 0-64-28.700-64-64s28.700-64 64-64 64 28.700 64 64-28.700 64-64 64z" fill="#fff"/></svg>
<div class="r" style="left:472px;top:716.7px;width:117px;height:8px;background:#323552;border-radius:4px;"></div>
<div class="r" style="left:619px;top:716.7px;width:141px;height:8px;background:#323552;border-radius:4px;"></div>
<span class="t" style="font-size:14px;color:#fff;transform:translate(471.90px,724.85px) scaleX(0.9453);-webkit-text-stroke:0.22px #fff;">0.0%</span>
<span class="t" style="font-size:14px;color:#fff;transform:translate(619.00px,724.85px) scaleX(0.9454);-webkit-text-stroke:0.22px #fff;">0.0% - 0 MB</span>
<span class="t" style="font-size:14px;color:#fff;transform:translate(790.31px,719.05px) scaleX(0.9547);-webkit-text-stroke:0.22px #fff;">2.4GB</span>
<span class="t" style="font-size:14px;color:#fff;transform:translate(958.21px,719.05px) scaleX(1.0193);-webkit-text-stroke:0.22px #fff;">0 / 0 Max</span>
<svg class="i" style="transform:translate(1134.40px,721.70px)" width="14.10" height="14.10" viewBox="0 0 512 512"><path d="M256 8C119.034 8 8 119.033 8 256s111.034 248 248 248 248-111.034 248-248S392.967 8 256 8zm130.108 117.892c65.448 65.448 70 165.481 20.677 235.637L150.470 105.216c70.204-49.356 170.226-44.735 235.638 20.676zM125.892 386.108c-65.448-65.448-70-165.481-20.677-235.637L361.530 406.784c-70.203 49.356-170.226 44.736-235.638-20.676z" fill="#ffaf00"/></svg>
<span class="t" style="font-size:14px;color:#ffaf00;transform:translate(1152.61px,718.85px) scaleX(0.9850);-webkit-text-stroke:0.22px #ffaf00;">Offline</span>
<svg class="i" style="transform:translate(143.90px,782.20px)" width="15.00" height="15.00" viewBox="0 0 512 512"><path d="M480 160H32c-17.673 0-32-14.327-32-32V64c0-17.673 14.327-32 32-32h448c17.673 0 32 14.327 32 32v64c0 17.673-14.327 32-32 32zm-48-88c-13.255 0-24 10.745-24 24s10.745 24 24 24 24-10.745 24-24-10.745-24-24-24zm-64 0c-13.255 0-24 10.745-24 24s10.745 24 24 24 24-10.745 24-24-10.745-24-24-24zm112 248H32c-17.673 0-32-14.327-32-32v-64c0-17.673 14.327-32 32-32h448c17.673 0 32 14.327 32 32v64c0 17.673-14.327 32-32 32zm-48-88c-13.255 0-24 10.745-24 24s10.745 24 24 24 24-10.745 24-24-10.745-24-24-24zm-64 0c-13.255 0-24 10.745-24 24s10.745 24 24 24 24-10.745 24-24-10.745-24-24-24zm112 248H32c-17.673 0-32-14.327-32-32v-64c0-17.673 14.327-32 32-32h448c17.673 0 32 14.327 32 32v64c0 17.673-14.327 32-32 32zm-48-88c-13.255 0-24 10.745-24 24s10.745 24 24 24 24-10.745 24-24-10.745-24-24-24zm-64 0c-13.255 0-24 10.745-24 24s10.745 24 24 24 24-10.745 24-24-10.745-24-24-24z" fill="#fff"/></svg>
<span class="t" style="font-size:14px;color:#007bff;transform:translate(165.70px,779.95px) scaleX(0.9212);-webkit-text-stroke:0.22px #007bff;">HI</span>
<svg class="i" style="transform:translate(317.30px,781.05px)" width="13.39" height="15.30" viewBox="0 0 448 512"><path d="M424.400 214.700L72.400 6.600C43.800-10.300 0 6.100 0 47.900V464c0 37.500 40.700 60.100 72.400 41.300l352-208c31.400-18.500 31.500-64.100 0-82.600z" fill="#fff"/></svg>
<svg class="i" style="transform:translate(343.80px,781.20px)" width="15.00" height="15.00" viewBox="0 0 512 512"><path d="M464 0c26.510 0 48 21.490 48 48v288c0 26.510-21.490 48-48 48H176c-26.510 0-48-21.490-48-48V48c0-26.510 21.490-48 48-48h288M176 416c-44.112 0-80-35.888-80-80V128H48c-26.510 0-48 21.490-48 48v288c0 26.510 21.490 48 48 48h288c26.510 0 48-21.490 48-48v-48H176z" fill="#fff"/></svg>
<svg class="i" style="transform:translate(372.30px,781.50px)" width="15.00" height="15.00" viewBox="0 0 512 512"><path d="M256 0C114.600 0 0 100.300 0 224c0 70.100 36.900 132.600 94.500 173.700 9.600 6.900 15.200 18.100 13.500 29.900l-9.400 66.200c-1.400 9.600 6 18.200 15.700 18.200H192v-56c0-4.400 3.600-8 8-8h16c4.400 0 8 3.600 8 8v56h64v-56c0-4.400 3.600-8 8-8h16c4.400 0 8 3.600 8 8v56h77.700c9.700 0 17.100-8.600 15.700-18.200l-9.400-66.200c-1.700-11.700 3.800-23 13.500-29.900C475.100 356.600 512 294.100 512 224 512 100.300 397.400 0 256 0zm-96 320c-35.300 0-64-28.700-64-64s28.700-64 64-64 64 28.700 64 64-28.700 64-64 64zm192 0c-35.300 0-64-28.700-64-64s28.700-64 64-64 64 28.700 64 64-28.700 64-64 64z" fill="#fff"/></svg>
<div class="r" style="left:472px;top:776.7px;width:117px;height:8px;background:#323552;border-radius:4px;"></div>
<div class="r" style="left:619px;top:776.7px;width:141px;height:8px;background:#323552;border-radius:4px;"></div>
<span class="t" style="font-size:14px;color:#fff;transform:translate(471.90px,784.85px) scaleX(0.9453);-webkit-text-stroke:0.22px #fff;">0.0%</span>
<span class="t" style="font-size:14px;color:#fff;transform:translate(619.00px,784.85px) scaleX(0.9454);-webkit-text-stroke:0.22px #fff;">0.0% - 0 MB</span>
<span class="t" style="font-size:14px;color:#fff;transform:translate(790.31px,779.05px) scaleX(0.9547);-webkit-text-stroke:0.22px #fff;">2.4GB</span>
<span class="t" style="font-size:14px;color:#fff;transform:translate(958.21px,779.05px) scaleX(1.0193);-webkit-text-stroke:0.22px #fff;">0 / 0 Max</span>
<svg class="i" style="transform:translate(1134.40px,781.70px)" width="14.10" height="14.10" viewBox="0 0 512 512"><path d="M256 8C119.034 8 8 119.033 8 256s111.034 248 248 248 248-111.034 248-248S392.967 8 256 8zm130.108 117.892c65.448 65.448 70 165.481 20.677 235.637L150.470 105.216c70.204-49.356 170.226-44.735 235.638 20.676zM125.892 386.108c-65.448-65.448-70-165.481-20.677-235.637L361.530 406.784c-70.203 49.356-170.226 44.736-235.638-20.676z" fill="#ffaf00"/></svg>
<span class="t" style="font-size:14px;color:#ffaf00;transform:translate(1152.61px,778.85px) scaleX(0.9850);-webkit-text-stroke:0.22px #ffaf00;">Offline</span>
<span class="t" style="font-size:14px;color:#cfd1de;transform:translate(127.41px,857.25px) scaleX(0.9960);-webkit-text-stroke:0.22px #cfd1de;">Showing 1 to 5 of 5 entries</span>
</body></html>
